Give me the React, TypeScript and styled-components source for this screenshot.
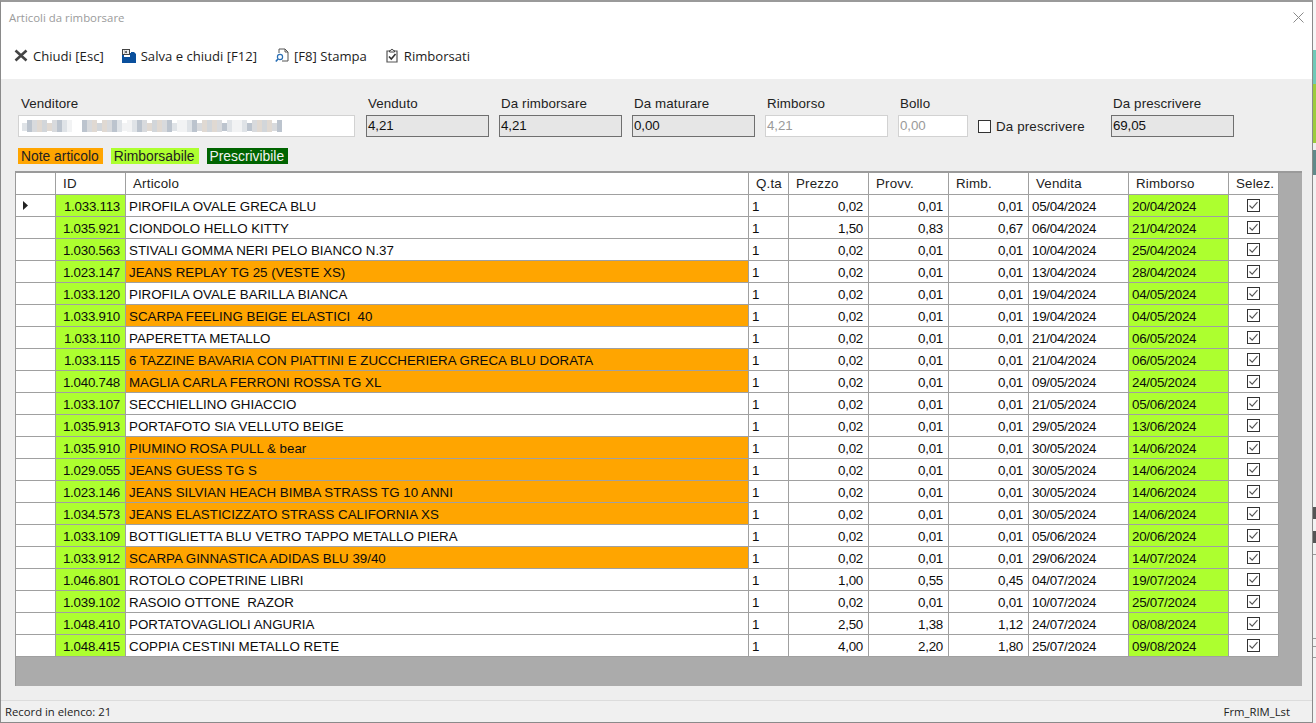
import React from "react";
import styled, { createGlobalStyle } from "styled-components";

const GlobalStyle = createGlobalStyle`
  html, body {
    margin: 0;
    padding: 0;
    background: #f2f2f2;
    overflow: hidden;
  }
  body {
    font-family: "Liberation Sans", Arial, sans-serif;
    color: #000;
  }
`;

type Row = {
  id: string;
  name: string;
  note?: boolean;
  prezzo: string;
  provv: string;
  rimb: string;
  vendita: string;
  rimborso: string;
};

const cheap = { prezzo: "0,02", provv: "0,01", rimb: "0,01" };

const rows: Row[] = [
  { id: "1.033.113", name: "PIROFILA OVALE GRECA BLU", ...cheap, vendita: "05/04/2024", rimborso: "20/04/2024" },
  { id: "1.035.921", name: "CIONDOLO HELLO KITTY", prezzo: "1,50", provv: "0,83", rimb: "0,67", vendita: "06/04/2024", rimborso: "21/04/2024" },
  { id: "1.030.563", name: "STIVALI GOMMA NERI PELO BIANCO N.37", ...cheap, vendita: "10/04/2024", rimborso: "25/04/2024" },
  { id: "1.023.147", name: "JEANS REPLAY TG 25 (VESTE XS)", note: true, ...cheap, vendita: "13/04/2024", rimborso: "28/04/2024" },
  { id: "1.033.120", name: "PIROFILA OVALE BARILLA BIANCA", ...cheap, vendita: "19/04/2024", rimborso: "04/05/2024" },
  { id: "1.033.910", name: "SCARPA FEELING BEIGE ELASTICI  40", note: true, ...cheap, vendita: "19/04/2024", rimborso: "04/05/2024" },
  { id: "1.033.110", name: "PAPERETTA METALLO", ...cheap, vendita: "21/04/2024", rimborso: "06/05/2024" },
  { id: "1.033.115", name: "6 TAZZINE BAVARIA CON PIATTINI E ZUCCHERIERA GRECA BLU DORATA", note: true, ...cheap, vendita: "21/04/2024", rimborso: "06/05/2024" },
  { id: "1.040.748", name: "MAGLIA CARLA FERRONI ROSSA TG XL", note: true, ...cheap, vendita: "09/05/2024", rimborso: "24/05/2024" },
  { id: "1.033.107", name: "SECCHIELLINO GHIACCIO", ...cheap, vendita: "21/05/2024", rimborso: "05/06/2024" },
  { id: "1.035.913", name: "PORTAFOTO SIA VELLUTO BEIGE", ...cheap, vendita: "29/05/2024", rimborso: "13/06/2024" },
  { id: "1.035.910", name: "PIUMINO ROSA PULL & bear", note: true, ...cheap, vendita: "30/05/2024", rimborso: "14/06/2024" },
  { id: "1.029.055", name: "JEANS GUESS TG S", note: true, ...cheap, vendita: "30/05/2024", rimborso: "14/06/2024" },
  { id: "1.023.146", name: "JEANS SILVIAN HEACH BIMBA STRASS TG 10 ANNI", note: true, ...cheap, vendita: "30/05/2024", rimborso: "14/06/2024" },
  { id: "1.034.573", name: "JEANS ELASTICIZZATO STRASS CALIFORNIA XS", note: true, ...cheap, vendita: "30/05/2024", rimborso: "14/06/2024" },
  { id: "1.033.109", name: "BOTTIGLIETTA BLU VETRO TAPPO METALLO PIERA", ...cheap, vendita: "05/06/2024", rimborso: "20/06/2024" },
  { id: "1.033.912", name: "SCARPA GINNASTICA ADIDAS BLU 39/40", note: true, ...cheap, vendita: "29/06/2024", rimborso: "14/07/2024" },
  { id: "1.046.801", name: "ROTOLO COPETRINE LIBRI", prezzo: "1,00", provv: "0,55", rimb: "0,45", vendita: "04/07/2024", rimborso: "19/07/2024" },
  { id: "1.039.102", name: "RASOIO OTTONE  RAZOR", ...cheap, vendita: "10/07/2024", rimborso: "25/07/2024" },
  { id: "1.048.410", name: "PORTATOVAGLIOLI ANGURIA", prezzo: "2,50", provv: "1,38", rimb: "1,12", vendita: "24/07/2024", rimborso: "08/08/2024" },
  { id: "1.048.415", name: "COPPIA CESTINI METALLO RETE", prezzo: "4,00", provv: "2,20", rimb: "1,80", vendita: "25/07/2024", rimborso: "09/08/2024" },
];

const Screen = styled.div`
  display: flex;
  width: 1316px;
  height: 723px;
`;

// what shows of the desktop behind the window, on its right edge
const DesktopEdge = styled.div`
  flex: 1;
  display: flex;
  flex-direction: column;
  background: #f2f2f2;
`;

const EdgeBand = styled.div<{ $h: number; $c: string }>`
  height: ${(p) => p.$h}px;
  flex: none;
  background: ${(p) => p.$c};
`;

const Window = styled.div`
  box-sizing: border-box;
  width: 1313px;
  height: 723px;
  flex: none;
  display: flex;
  flex-direction: column;
  border: 1px solid #8a8a8a;
  border-top: 2px solid #9a9a9a;
  background: #f0f0f0;
`;

const TitleBar = styled.div`
  height: 30px;
  flex: none;
  display: flex;
  align-items: center;
  justify-content: space-between;
  padding: 0 8px 0 8px;
  background: #fff;
  font-family: "Open Sans", sans-serif;
  font-size: 11.4px;
  color: #9b9b9b;
`;

const Toolbar = styled.div`
  height: 47px;
  flex: none;
  display: flex;
  align-items: center;
  gap: 18px;
  padding: 0 0 0 13px;
  background: #fff;
`;

const ToolButton = styled.div`
  display: flex;
  align-items: center;
  gap: 5px;
  font-family: "Open Sans", sans-serif;
  font-size: 13.1px;
  color: #1c1c1c;
`;

const Content = styled.div`
  flex: 1;
  min-height: 0;
  display: flex;
  flex-direction: column;
  padding: 17px 10px 14px 13px;
  background: #eeeeee;
`;

const FieldsRow = styled.div`
  display: flex;
  align-items: flex-end;
  padding-left: 4px;
`;

const Field = styled.div<{ $w: number; $ml?: number }>`
  width: ${(p) => p.$w}px;
  margin-left: ${(p) => p.$ml ?? 10}px;
  flex: none;
  display: flex;
  flex-direction: column;
  gap: 4px;
`;

const Label = styled.div<{ $pl?: number }>`
  font-size: 13.33px;
  letter-spacing: 0.12px;
  line-height: 15px;
  padding-left: ${(p) => p.$pl ?? 2}px;
  color: #222;
`;

const Input = styled.div<{ $kind: "readonly" | "disabled" | "plain" }>`
  box-sizing: border-box;
  height: 22px;
  padding: 0 1px 1px;
  display: flex;
  align-items: center;
  overflow: hidden;
  font-size: 13.33px;
  letter-spacing: -0.1px;
  background: ${(p) => (p.$kind === "readonly" ? "#e6e6e6" : "#fff")};
  color: ${(p) => (p.$kind === "disabled" ? "#9a9a9a" : "#111")};
  border: 1px solid ${(p) => (p.$kind === "readonly" ? "#6f6f6f" : "#d2d2d2")};
`;

const CheckField = styled.div`
  width: 123px;
  height: 22px;
  margin-left: 10px;
  flex: none;
  display: flex;
  align-items: center;
  gap: 5px;
  font-size: 13.33px;
  letter-spacing: 0.15px;
  color: #222;
`;

const CheckBox = styled.span`
  box-sizing: border-box;
  width: 13px;
  height: 13px;
  background: #fff;
  border: 1px solid #333;
`;

const Legend = styled.div`
  display: flex;
  gap: 8px;
  margin: 11px 0 7px 4px;
`;

const Chip = styled.div<{ $bg: string; $fg: string }>`
  height: 16px;
  padding: 0 4px 0 3px;
  font-size: 13.85px;
  line-height: 17px;
  background: ${(p) => p.$bg};
  color: ${(p) => p.$fg};
`;

const GridFrame = styled.div`
  flex: 1;
  min-height: 0;
  margin-left: 1px;
  border: 1px solid #9a9a9a;
  border-width: 2px 0 0 1px;
  background: #ababab;
`;

const GridRow = styled.div`
  display: grid;
  grid-template-columns: 40px 70px 623px 40px 80px 80px 80px 100px 100px 50px;
  width: 1263px;
  height: 22px;
  font-size: 13.33px;
`;

const HeadCell = styled.div<{ $pl?: number }>`
  box-sizing: border-box;
  background: #fff;
  border-right: 1px solid #a0a0a0;
  border-bottom: 1px solid #a0a0a0;
  padding-left: ${(p) => p.$pl ?? 7}px;
  font-size: 13.33px;
  letter-spacing: 0.2px;
  line-height: 21px;
  color: #222;
`;

const SideCell = styled.div`
  box-sizing: border-box;
  background: #fff;
  border-right: 1px solid #a0a0a0;
  border-bottom: 1px solid #a0a0a0;
  display: flex;
  align-items: center;
  padding-left: 7px;
`;

const Cell = styled.div<{ $right?: boolean; $bg?: string; $num?: boolean }>`
  box-sizing: border-box;
  background: ${(p) => p.$bg ?? "#fff"};
  border-right: 1px solid #a0a0a0;
  border-bottom: 1px solid #a0a0a0;
  padding: 0 5px 0 3px;
  line-height: 23px;
  white-space: pre;
  overflow: hidden;
  letter-spacing: ${(p) => (p.$num ? "-0.25px" : "0")};
  text-align: ${(p) => (p.$right ? "right" : "left")};
  color: #0c0c0c;
`;

const CheckCell = styled(Cell)`
  display: flex;
  align-items: center;
  justify-content: center;
  padding: 0;
`;

const StatusBar = styled.div`
  height: 21px;
  flex: none;
  display: flex;
  align-items: center;
  justify-content: space-between;
  padding: 0 22px 0 4px;
  border-top: 1px solid #dcdcdc;
  background: #f0f0f0;
  font-family: "Open Sans", sans-serif;
  font-size: 11.3px;
  color: #222;
`;

const mosaic = ["#dfe3e7", "#c9ced6", "#ece6da", "#e2dcd2", "#bcc4ce", "#eef0f2", "#d2d6da", "#e0d9d2", "#a9b3bf", "#f2f3f4", "#d8dadd"];

function BlurredName() {
  const cells: React.ReactNode[] = [];
  for (let i = 0; i < 52; i++) {
    if (i >= 10 && i < 12) continue;
    const tall = (i * i) % 5 !== 0;
    cells.push(<rect key={i} x={i * 5} y={tall ? 0 : 3} width="5" height={tall ? 12 : 8} fill={mosaic[(i * i + i * 3) % 11]} />);
  }
  return (
    <svg width="262" height="12" style={{ marginLeft: 2, filter: "blur(0.7px)" }}>
      {cells}
    </svg>
  );
}

function CloseIcon() {
  return (
    <svg width="14" height="13" viewBox="0 0 14 13">
      <path d="M1.5 1.5 L12.5 11.5 M12.5 1.5 L1.5 11.5" stroke="#444" strokeWidth="2.6" />
    </svg>
  );
}

function SaveIcon() {
  return (
    <svg width="14" height="14" viewBox="0 0 14 14">
      <path d="M0 4 H2 V8 H8 V4 H9 V3 H12 L14 5 V14 H0 Z" fill="#0a4f9c" />
      <rect x="0.5" y="0.5" width="7" height="5" fill="#eee" stroke="#444" strokeWidth="1" />
      <path d="M2.5 2 L5 4 M5 2 L2.5 4" stroke="#444" strokeWidth="0.9" />
    </svg>
  );
}

function PreviewIcon() {
  return (
    <svg width="14" height="15" viewBox="0 0 14 15" fill="none">
      <path d="M4 5 V1 H10 L13 4 V13 H7" stroke="#555" strokeWidth="1" />
      <path d="M10 1 V4 H13" stroke="#555" strokeWidth="1" />
      <circle cx="5" cy="9" r="2.6" stroke="#2a6fb5" strokeWidth="1.2" />
      <path d="M3 11 L0.8 13.6" stroke="#2a6fb5" strokeWidth="1.6" />
    </svg>
  );
}

function ClipboardIcon() {
  return (
    <svg width="14" height="15" viewBox="0 0 14 15" fill="none">
      <path d="M4 3 H2 V14 H12 V3 H10" stroke="#555" strokeWidth="1.2" />
      <path d="M4.5 4 V2.5 H5.8 A1.2 1.2 0 0 1 8.2 2.5 H9.5 V4 Z" stroke="#444" strokeWidth="1" />
      <path d="M4 8.5 L6.3 11 L10.5 6" stroke="#333" strokeWidth="1.6" />
    </svg>
  );
}

function RowCheck() {
  return (
    <svg width="13" height="13" viewBox="0 0 13 13" fill="none">
      <rect x="0.5" y="0.5" width="12" height="12" stroke="#333" />
      <path d="M2.5 6.5 L5.2 9.2 L10.5 3.2" stroke="#555" strokeWidth="1.1" />
    </svg>
  );
}

function CurrentMarker() {
  return (
    <svg width="6" height="9" viewBox="0 0 6 9">
      <path d="M0 0 L5 4.5 L0 9 Z" fill="#222" />
    </svg>
  );
}

function CloseGlyph() {
  return (
    <svg width="11" height="11" viewBox="0 0 11 11">
      <path d="M0.5 0.5 L10.5 10.5 M10.5 0.5 L0.5 10.5" stroke="#8a8a8a" strokeWidth="1" />
    </svg>
  );
}

const GREEN = "#adff2f";
const ORANGE = "#ffa500";

const edgeBands = [
  { h: 50, c: "#f6f6f6" },
  { h: 34, c: "#6fc9b8" },
  { h: 34, c: "#9ccc3c" },
  { h: 25, c: "#9ccc3c" },
  { h: 7, c: "#eeeeee" },
  { h: 25, c: "#5f8a8a" },
  { h: 332, c: "#f2f2f2" },
  { h: 12, c: "#555555" },
  { h: 12, c: "#f2f2f2" },
  { h: 12, c: "#555555" },
  { h: 11, c: "#f2f2f2" },
  { h: 1, c: "#9a9a9a" },
  { h: 83, c: "#f2f2f2" },
  { h: 1, c: "#9a9a9a" },
  { h: 7, c: "#f2f2f2" },
  { h: 1, c: "#9a9a9a" },
  { h: 10, c: "#f2f2f2" },
  { h: 1, c: "#9a9a9a" },
];

export default function App() {
  return (
    <>
      <GlobalStyle />
      <Screen>
        <Window>
          <TitleBar>
            <span>Articoli da rimborsare</span>
            <CloseGlyph />
          </TitleBar>
          <Toolbar>
            <ToolButton><CloseIcon /> Chiudi [Esc]</ToolButton>
            <ToolButton><SaveIcon /> Salva e chiudi [F12]</ToolButton>
            <ToolButton><PreviewIcon /> [F8] Stampa</ToolButton>
            <ToolButton><ClipboardIcon /> Rimborsati</ToolButton>
          </Toolbar>
          <Content>
            <FieldsRow>
              <Field $w={337} $ml={0}>
                <Label $pl={3}>Venditore</Label>
                <Input $kind="plain"><BlurredName /></Input>
              </Field>
              <Field $w={123} $ml={11}>
                <Label>Venduto</Label>
                <Input $kind="readonly">4,21</Input>
              </Field>
              <Field $w={123}>
                <Label>Da rimborsare</Label>
                <Input $kind="readonly">4,21</Input>
              </Field>
              <Field $w={123}>
                <Label>Da maturare</Label>
                <Input $kind="readonly">0,00</Input>
              </Field>
              <Field $w={123}>
                <Label>Rimborso</Label>
                <Input $kind="disabled">4,21</Input>
              </Field>
              <Field $w={70}>
                <Label>Bollo</Label>
                <Input $kind="disabled">0,00</Input>
              </Field>
              <CheckField>
                <CheckBox />
                Da prescrivere
              </CheckField>
              <Field $w={123}>
                <Label>Da prescrivere</Label>
                <Input $kind="readonly">69,05</Input>
              </Field>
            </FieldsRow>
            <Legend>
              <Chip $bg={ORANGE} $fg="#222">Note articolo</Chip>
              <Chip $bg={GREEN} $fg="#222">Rimborsabile</Chip>
              <Chip $bg="#006400" $fg="#f2f2f2">Prescrivibile</Chip>
            </Legend>
            <GridFrame>
              <GridRow>
                <HeadCell />
                <HeadCell>ID</HeadCell>
                <HeadCell>Articolo</HeadCell>
                <HeadCell>Q.ta</HeadCell>
                <HeadCell>Prezzo</HeadCell>
                <HeadCell>Provv.</HeadCell>
                <HeadCell>Rimb.</HeadCell>
                <HeadCell>Vendita</HeadCell>
                <HeadCell>Rimborso</HeadCell>
                <HeadCell>Selez.</HeadCell>
              </GridRow>
              {rows.map((r, i) => (
                <GridRow key={r.id}>
                  <SideCell>{i === 0 && <CurrentMarker />}</SideCell>
                  <Cell $right $num $bg={GREEN}>{r.id}</Cell>
                  <Cell $bg={r.note ? ORANGE : undefined}>{r.name}</Cell>
                  <Cell>1</Cell>
                  <Cell $right $num>{r.prezzo}</Cell>
                  <Cell $right $num>{r.provv}</Cell>
                  <Cell $right $num>{r.rimb}</Cell>
                  <Cell $num>{r.vendita}</Cell>
                  <Cell $num $bg={GREEN}>{r.rimborso}</Cell>
                  <CheckCell><RowCheck /></CheckCell>
                </GridRow>
              ))}
            </GridFrame>
          </Content>
          <StatusBar>
            <span>Record in elenco: 21</span>
            <span>Frm_RIM_Lst</span>
          </StatusBar>
        </Window>
        <DesktopEdge>
          {edgeBands.map((b, i) => (
            <EdgeBand key={i} $h={b.h} $c={b.c} />
          ))}
        </DesktopEdge>
      </Screen>
    </>
  );
}
